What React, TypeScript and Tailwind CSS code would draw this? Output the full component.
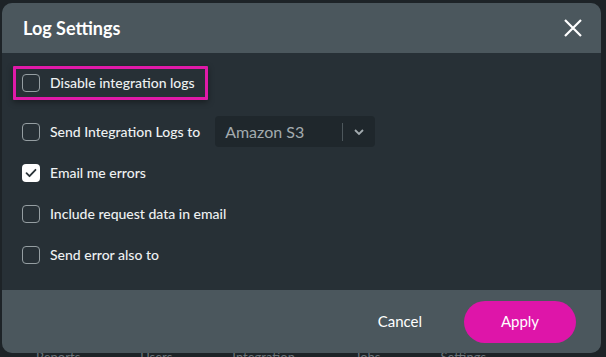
import React from "react";

const font = { fontFamily: "Lato, 'Open Sans', sans-serif" };

const Box: React.FC<{ checked?: boolean }> = ({ checked }) =>
	checked ? (
		<span className="flex h-[18px] w-[18px] shrink-0 items-center justify-center rounded-[4px] bg-white">
			<svg width="12" height="10" viewBox="0 0 12 10" fill="none">
				<path d="M1.5 5.2 4.5 8.2 10.5 1.8" stroke="#2b3439" strokeWidth="1.8" strokeLinecap="round" strokeLinejoin="round" />
			</svg>
		</span>
	) : (
		<span className="h-[18px] w-[18px] shrink-0 rounded-[4px] border border-[#959ea2]" />
	);

const Row: React.FC<{ label: string; checked?: boolean; children?: React.ReactNode }> = ({ label, checked, children }) => (
	<div className="flex items-center gap-[10px]">
		<Box checked={checked} />
		<span className="text-[14px] font-medium leading-[20px] text-[#eef1f2]">{label}</span>
		{children}
	</div>
);

export default function App() {
	return (
		<div className="relative h-[357px] w-[606px] overflow-hidden bg-[#1d2327]" style={font}>
			{/* page behind the dialog, barely visible at the bottom */}
			<div className="absolute left-[36px] top-[348px] flex gap-[60px] text-[13px] text-[#6b7479]">
				<span>Reports</span>
				<span>Users</span>
				<span>Integration</span>
				<span>Jobs</span>
				<span>Settings</span>
			</div>

			<div className="relative ml-[2px] mt-[3px] flex h-[350px] w-[599px] flex-col overflow-hidden rounded-[10px] bg-[#273036]">
				<div className="flex h-[50px] items-center justify-between bg-[#4b575d] pl-[21px] pr-[18px]">
					<h1 className="text-[18px] font-bold text-white">Log Settings</h1>
					<svg width="20" height="20" viewBox="0 0 20 20" fill="none">
						<path d="M2 2 18 18M18 2 2 18" stroke="#fff" strokeWidth="2.2" />
					</svg>
				</div>

				<div className="flex flex-1 flex-col gap-[21px] pl-[20px] pt-[13px]">
					<div className="-ml-[9px] w-fit rounded-[1px] border-[3px] border-[#e01aa8] py-[4px] pl-[6px] pr-[10px] shadow-[0_2px_6px_rgba(0,0,0,0.4)]">
						<Row label="Disable integration logs" />
					</div>
					<div className="-my-[5px]">
						<Row label="Send Integration Logs to">
							<div className="ml-[5px] flex h-[31px] w-[160px] items-center rounded-[4px] bg-[#1f272c] pl-[10px]">
								<span className="flex-1 text-[16px] text-[#a3abaf]">Amazon S3</span>
								<span className="h-[18px] w-px bg-[#4d575c]" />
								<svg className="mx-[10px]" width="12" height="8" viewBox="0 0 12 8" fill="none">
									<path d="M2 2 6 6 10 2" stroke="#a3abaf" strokeWidth="1.8" />
								</svg>
							</div>
						</Row>
					</div>
					<Row label="Email me errors" checked />
					<Row label="Include request data in email" />
					<Row label="Send error also to" />
				</div>

				<div className="flex h-[63px] items-center justify-end gap-[42px] bg-[#4b575d] pr-[25px]">
					<span className="text-[15px] text-white">Cancel</span>
					<button className="h-[42px] w-[112px] rounded-full bg-[#de15a9] text-[15px] text-white">Apply</button>
				</div>
			</div>
		</div>
	);
}
